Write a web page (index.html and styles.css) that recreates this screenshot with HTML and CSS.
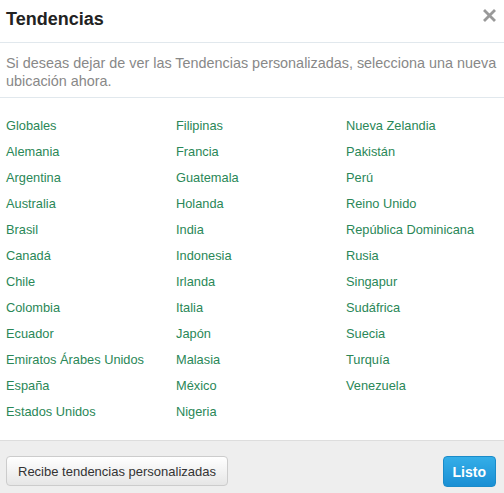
FILE: index.html
```html
<!DOCTYPE html>
<html>
	<head>
		<title>Tendencias</title>
		<link rel="stylesheet" href="styles.css">
	</head>
	<body>
		<div class="dialog">
			<div class="header">
				<h3 class="title">Tendencias</h3>
				<button class="close" aria-label="Cerrar">
					<svg width="13" height="13" viewBox="0 0 13 13"><path d="M2 2 L11 11 M11 2 L2 11" stroke="#999" stroke-width="2.8" stroke-linecap="square"/></svg>
				</button>
			</div>
			<p class="intro">Si deseas dejar de ver las Tendencias personalizadas, selecciona una nueva ubicación ahora.</p>
			<ul class="places">
				<li><a href="#">Globales</a></li>
				<li><a href="#">Alemania</a></li>
				<li><a href="#">Argentina</a></li>
				<li><a href="#">Australia</a></li>
				<li><a href="#">Brasil</a></li>
				<li><a href="#">Canadá</a></li>
				<li><a href="#">Chile</a></li>
				<li><a href="#">Colombia</a></li>
				<li><a href="#">Ecuador</a></li>
				<li><a href="#">Emiratos Árabes Unidos</a></li>
				<li><a href="#">España</a></li>
				<li><a href="#">Estados Unidos</a></li>
				<li><a href="#">Filipinas</a></li>
				<li><a href="#">Francia</a></li>
				<li><a href="#">Guatemala</a></li>
				<li><a href="#">Holanda</a></li>
				<li><a href="#">India</a></li>
				<li><a href="#">Indonesia</a></li>
				<li><a href="#">Irlanda</a></li>
				<li><a href="#">Italia</a></li>
				<li><a href="#">Japón</a></li>
				<li><a href="#">Malasia</a></li>
				<li><a href="#">México</a></li>
				<li><a href="#">Nigeria</a></li>
				<li><a href="#">Nueva Zelandia</a></li>
				<li><a href="#">Pakistán</a></li>
				<li><a href="#">Perú</a></li>
				<li><a href="#">Reino Unido</a></li>
				<li><a href="#">República Dominicana</a></li>
				<li><a href="#">Rusia</a></li>
				<li><a href="#">Singapur</a></li>
				<li><a href="#">Sudáfrica</a></li>
				<li><a href="#">Suecia</a></li>
				<li><a href="#">Turquía</a></li>
				<li><a href="#">Venezuela</a></li>
			</ul>
			<div class="footer">
				<button class="btn">Recibe tendencias personalizadas</button>
				<button class="btn primary">Listo</button>
			</div>
		</div>
	</body>
</html>
```
FILE: styles.css
```css
body {
	margin: 0;
	font-family: "Liberation Sans", Arial, sans-serif;
	background: #fff;
}

.dialog {
	width: 504px;
	height: 493px;
	display: flex;
	flex-direction: column;
}

.header {
	display: flex;
	justify-content: space-between;
	align-items: flex-start;
	padding: 7px 8px 11px 6px;
	border-bottom: 1px solid #e1e8ed;
}

.title {
	margin: 0;
	font-size: 18px;
	line-height: 24px;
	font-weight: bold;
	color: #222;
}

.close {
	border: 0;
	background: none;
	padding: 0;
	margin-top: 2px;
	width: 13px;
	height: 13px;
	line-height: 0;
}

.intro {
	margin: 0;
	padding: 11px 2px 7px 6px;
	font-size: 14.4px;
	line-height: 18px;
	color: #888;
	border-bottom: 1px solid #e1e8ed;
}

.places {
	list-style: none;
	margin: 0;
	padding: 15px 0 15px 6px;
	display: grid;
	grid-template-columns: repeat(3, 170px);
	grid-template-rows: repeat(12, 26px);
	grid-auto-flow: column;
	font-size: 12.8px;
	line-height: 26px;
}

.places a {
	color: #2a8757;
	text-decoration: none;
}

.footer {
	flex: 1;
	display: flex;
	justify-content: space-between;
	align-items: flex-start;
	padding: 15px 8px 0 6px;
	background: #eee;
	border-top: 1px solid #ddd;
}

.btn {
	height: 30px;
	padding: 0 11px;
	font-family: "Liberation Sans", Arial, sans-serif;
	font-size: 13px;
	color: #333;
	border: 1px solid #ccc;
	border-radius: 4px;
	background: linear-gradient(#fff, #e6e6e6);
}

.primary {
	height: 31px;
	padding: 0 9px;
	font-size: 14px;
	font-weight: bold;
	color: #fff;
	border-color: #1a8bc9;
	background: linear-gradient(#34aee8, #1a8fd4);
}
```
